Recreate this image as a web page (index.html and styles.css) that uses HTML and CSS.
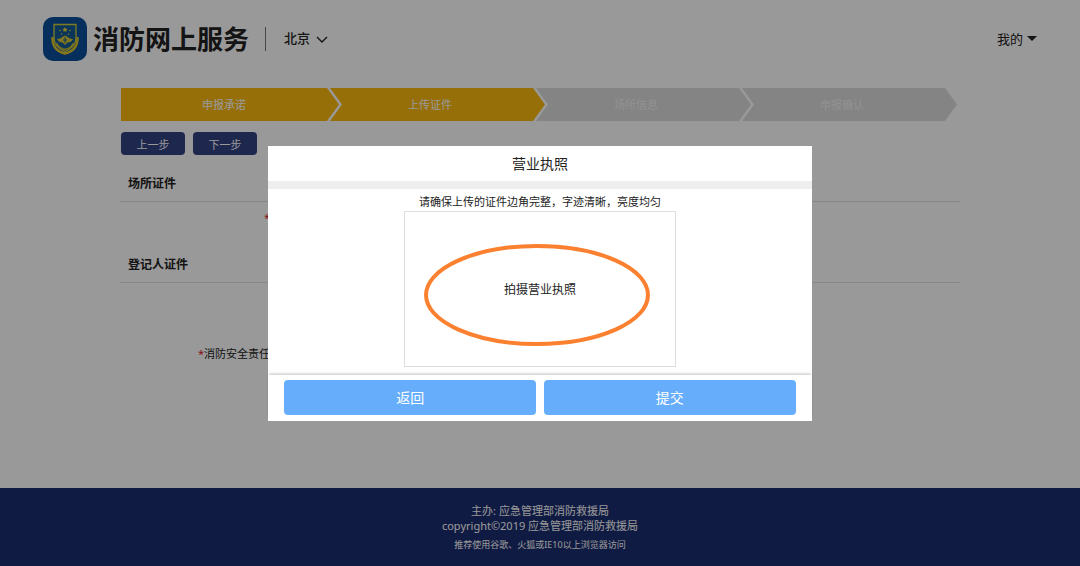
FILE: index.html
```html
<!DOCTYPE html>
<html lang="zh-CN">
<head>
<meta charset="utf-8">
<meta name="viewport" content="width=device-width, initial-scale=1">
<title>消防网上服务</title>
<link rel="stylesheet" href="styles.css">
</head>
<body>
<div class="page">
  <header class="header">
    <svg class="logo" viewBox="0 0 44 44" aria-hidden="true">
      <rect width="44" height="44" rx="10" fill="#0c4f9b"/>
      <path d="M11 7.500H33V21C33 28 28 32 22 34.500C16 32 11 28 11 21Z" fill="#145b94" stroke="#d3cf3a" stroke-width="1.300"/>
      <path d="M22 10l.8 1.700 1.900.2-1.400 1.300.4 1.900-1.700-1-1.700 1 .4-1.900-1.400-1.300 1.900-.2z" fill="#f0d53a"/>
      <g fill="#d9cf3a"><circle cx="17" cy="13.500" r=".8"/><circle cx="27" cy="13.500" r=".8"/><circle cx="18.500" cy="17" r=".7"/><circle cx="25.500" cy="17" r=".7"/></g>
      <path d="M14 22c3 0 4.500-1 6-2.500l2-1 2 1c1.500 1.500 3 2.500 6 2.500-1 2.500-3 3.500-5.500 3.500L22 28l-2.500-2.500C17 25.500 15 24.500 14 22z" fill="#d9c634"/>
      <path d="M20 23h4M22 20v6" stroke="#145b94" stroke-width="1"/>
      <path d="M9.500 20C9 29 14 34.500 22 36.500C30 34.500 35 29 34.500 20" fill="none" stroke="#e0c52c" stroke-width="2.400"/>
      <path d="M13.500 26C15.500 30 18 31.500 22 32.500C26 31.500 28.500 30 30.500 26" fill="none" stroke="#d3bd2d" stroke-width="1.300"/>
    </svg>
    <h1 class="brand">消防网上服务</h1>
    <button class="city" type="button">北京
      <svg class="chevron" viewBox="0 0 12 8" aria-hidden="true"><path d="M1 1l5 5 5-5" fill="none" stroke="currentColor" stroke-width="1.400"/></svg>
    </button>
    <button class="account" type="button">我的
      <svg class="caret" viewBox="0 0 10 5" aria-hidden="true"><path d="M0 0h10L5 5z" fill="currentColor"/></svg>
    </button>
  </header>

  <main class="content">
    <ol class="steps">
      <li class="step step-done">申报承诺</li>
      <li class="step step-done">上传证件</li>
      <li class="step">场所信息</li>
      <li class="step">申报确认</li>
    </ol>
    <div class="nav-buttons">
      <button class="nav-button" type="button">上一步</button>
      <button class="nav-button" type="button">下一步</button>
    </div>
    <section class="section">
      <h2 class="section-title">场所证件</h2>
      <div class="field"><span class="field-label"><span class="required">*</span>营业执照</span></div>
    </section>
    <section class="section">
      <h2 class="section-title">登记人证件</h2>
      <div class="field field-person"><span class="field-label"><span class="required">*</span>消防安全责任人身份证</span></div>
    </section>
  </main>

  <footer class="footer">
    <p class="footer-line">主办: 应急管理部消防救援局</p>
    <p class="footer-line">copyright©2019 应急管理部消防救援局</p>
    <p class="footer-note">推荐使用谷歌、火狐或IE10以上浏览器访问</p>
  </footer>
</div>

<div class="overlay">
  <div class="dialog" role="dialog" aria-modal="true" aria-labelledby="dialog-title">
    <h2 class="dialog-title" id="dialog-title">营业执照</h2>
    <div class="dialog-body">
      <p class="hint">请确保上传的证件边角完整，字迹清晰，亮度均匀</p>
      <button class="capture" type="button">
        <svg class="ring" viewBox="0 0 228 104" aria-hidden="true"><ellipse cx="114" cy="52" rx="111" ry="49" fill="none" stroke="#fb8130" stroke-width="4"/></svg>
        拍摄营业执照
      </button>
    </div>
    <div class="dialog-actions">
      <button class="action" type="button">返回</button>
      <button class="action" type="button">提交</button>
    </div>
  </div>
</div>
</body>
</html>
```

FILE: styles.css
```css
* {
  box-sizing: border-box;
}

body,
h1,
h2,
p,
ol {
  margin: 0;
  padding: 0;
}

body {
  background: #fff;
  color: #222;
  font-family: "Noto Sans", "Noto Sans CJK SC", sans-serif;
  font-size: 11px;
}

button {
  border: 0;
  padding: 0;
  background: none;
  color: inherit;
  font: inherit;
  cursor: pointer;
}

.page {
  display: flex;
  flex-direction: column;
  min-height: 100vh;
}

.header {
  display: flex;
  align-items: center;
  padding: 17px 43px 0;
}

.logo {
  width: 44px;
  height: 44px;
  margin-right: 6px;
}

.brand {
  font-size: 26px;
  line-height: 44px;
}

.city {
  display: flex;
  align-items: center;
  gap: 6px;
  height: 24px;
  margin-left: 16px;
  padding-left: 18px;
  border-left: 1px solid #777;
  font-size: 13px;
  font-weight: 500;
  line-height: 20px;
  padding-bottom: 2px;
}

.chevron {
  width: 12px;
  height: 8px;
  margin-top: 4px;
}

.account {
  display: flex;
  align-items: center;
  gap: 4px;
  margin-left: auto;
  padding-bottom: 2px;
  font-size: 13px;
}

.caret {
  width: 10px;
  height: 5px;
}

.content {
  flex: 1;
  margin: 27px 120px 0;
}

.steps {
  display: grid;
  grid-template-columns: repeat(4, 1fr);
  padding: 0 15px 0 1px;
  list-style: none;
}

.step {
  margin-right: -12px;
  padding-right: 12px;
  background: #dcdcdc;
  color: #f2f2f2;
  line-height: 33px;
  text-align: center;
  clip-path: polygon(3px 0, calc(100% - 12px) 0, 100% 50%, calc(100% - 12px) 100%, 3px 100%, 15px 50%);
}

.step:first-child {
  clip-path: polygon(0 0, calc(100% - 12px) 0, 100% 50%, calc(100% - 12px) 100%, 0 100%);
}

.step-done {
  background: #fbb90f;
  color: #fff;
}

.nav-buttons {
  display: flex;
  gap: 8px;
  padding: 11px 1px;
}

.nav-button {
  width: 64px;
  height: 23px;
  border-radius: 4px;
  background: #324383;
  color: #fff;
}

.section-title {
  padding: 0 8px;
  border-bottom: 1px solid #e2e2e2;
  font-size: 12px;
  font-weight: 700;
  line-height: 35px;
}

.field {
  display: grid;
  grid-template-columns: 194px 1fr;
  padding: 8px 0 21px;
  line-height: 16px;
}

.field-label {
  justify-self: end;
  white-space: nowrap;
}

.field-person {
  padding-top: 63px;
}

.required {
  color: #e02020;
}

.footer {
  padding: 15px 0 14px;
  background: #1b2d70;
  color: #fff;
  text-align: center;
}

.footer-line {
  line-height: 15px;
}

.footer-note {
  padding-top: 5px;
  font-size: 9px;
  line-height: 14px;
}

.overlay {
  position: fixed;
  inset: 0;
  display: flex;
  align-items: center;
  justify-content: center;
  background: rgba(0, 0, 0, 0.4);
}

.dialog {
  width: 50.3%;
  background: #fff;
}

.dialog-title {
  border-bottom: 8px solid #eee;
  font-size: 14px;
  font-weight: 400;
  line-height: 35px;
  text-align: center;
}

.dialog-body {
  display: flex;
  flex-direction: column;
  align-items: center;
  padding: 3px 0 8px;
}

.hint {
  line-height: 19px;
}

.capture {
  position: relative;
  width: 50%;
  height: 156px;
  border: 1px solid #ddd;
  font-size: 12px;
}

.ring {
  position: absolute;
  top: 31px;
  left: 18px;
  width: 228px;
  height: 104px;
}

.dialog-actions {
  display: flex;
  gap: 8px;
  padding: 5px 16px 6px;
  box-shadow: 0 -2px 3px -1px rgba(0, 0, 0, 0.25);
}

.action {
  flex: 1;
  height: 35px;
  border-radius: 4px;
  background: #66aefc;
  color: #fff;
  font-size: 14px;
}
```
